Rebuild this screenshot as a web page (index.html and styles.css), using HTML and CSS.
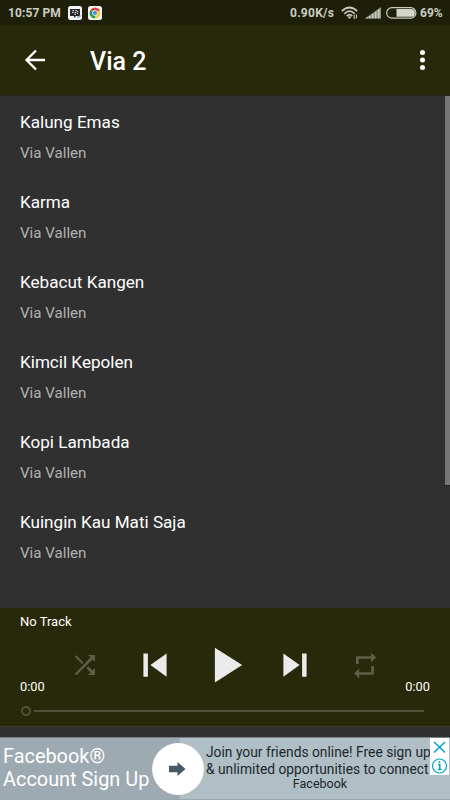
FILE: index.html
```html
<!DOCTYPE html>
<html lang="en">
<head>
<meta charset="utf-8">
<title>Via 2</title>
<link rel="stylesheet" href="styles.css">
</head>
<body>
<div class="app">
  <div class="status">
    <span class="clock">10:57 PM</span>
    <svg class="notif" width="14" height="14" viewBox="0 0 14 14"><rect width="14" height="14" rx="2.5" fill="#f4f4f4"/><path d="M2 3h10v7H8l-2 2v-2H2z" fill="#28292b"/><path d="M9 11h3v-2" stroke="#58a6c8" fill="none"/><path d="M4.4 4.6h1.6M7.2 4.6h1.6M4 6.4h1.6M6.8 6.4h1.6M9.3 5.5h1.2M6.4 8.2h1.6M8.9 7.3h1.2" stroke="#fff" stroke-width=".9"/></svg>
    <svg class="notif chrome" width="14" height="14" viewBox="0 0 14 14"><rect width="14" height="14" rx="2.5" fill="#f8f6f3"/><path d="M7 7L2.2 4.25A5.5 5.5 0 0 1 11.8 4.25z" fill="#dd4b3e"/><path d="M7 7L11.8 4.25A5.5 5.5 0 0 1 7 12.5z" fill="#fbca3e"/><path d="M7 7v5.5A5.5 5.5 0 0 1 2.2 4.25z" fill="#21a05a"/><path d="M7 4.3h4.8" stroke="#dd4b3e"/><circle cx="7" cy="7" r="2.7" fill="#f5f5f5"/><circle cx="7" cy="7" r="2.1" fill="#4688e8"/></svg>
    <span class="speed">0.90K/s</span>
    <svg class="wifi" width="18" height="14" viewBox="0 0 18 14" fill="none" stroke="#c9cabd" stroke-width="1.7"><path d="M.8 5.2Q8.5-2.2 16.2 5.2M3.3 7.8Q8.5 2.6 13.7 7.8M5.7 10.1Q8.5 7.2 11.3 10.1"/><path d="M8.5 13L6.8 11Q8.5 9.5 10.2 11z" fill="#c9cabd" stroke="none"/><path d="M13.2 9v4M15.4 8.5v4" stroke-width="1.1"/></svg>
    <svg class="signal" width="16" height="12" viewBox="0 0 16 12"><path d="M0 11.5L16 0v11.5z" fill="#92948a"/><path d="M1 11.5v-1h1.5v1zM4 11.5V9h1.5v2.5zM7 11.5V7h1.5v4.5zM10 11.5V5h1.5v6.5zM13 11.5V2.5h1.5v9z" fill="#c7c9bb"/></svg>
    <svg class="battery" width="31" height="12" viewBox="0 0 31 12"><rect x=".7" y=".7" width="29.2" height="10.4" rx="5.2" fill="none" stroke="#c9cabd" stroke-width="1.2"/><path d="M10.5 2H25a3.9 3.9 0 0 1 0 7.8H10.5z" fill="#d4d5cb"/></svg>
    <span class="percent">69%</span>
  </div>
  <header class="bar">
    <svg class="back" width="22" height="22" viewBox="0 0 22 22" fill="none" stroke="#fff" stroke-width="2.3"><path d="M21 11H2.5M12 1.5L2.5 11l9.5 9.5"/></svg>
    <h1>Via 2</h1>
    <svg class="more" width="6" height="22" viewBox="0 0 6 22" fill="#fff"><circle cx="2.5" cy="3.5" r="2.5"/><circle cx="2.5" cy="11" r="2.5"/><circle cx="2.5" cy="18.5" r="2.5"/></svg>
  </header>
  <main class="content">
    <ul class="songs">
      <li><b>Kalung Emas</b><span>Via Vallen</span></li>
      <li><b>Karma</b><span>Via Vallen</span></li>
      <li><b>Kebacut Kangen</b><span>Via Vallen</span></li>
      <li><b>Kimcil Kepolen</b><span>Via Vallen</span></li>
      <li><b>Kopi Lambada</b><span>Via Vallen</span></li>
      <li><b>Kuingin Kau Mati Saja</b><span>Via Vallen</span></li>
    </ul>
    <div class="scrollbar"></div>
  </main>
  <section class="player">
    <div class="track">No Track</div>
    <div class="controls">
      <svg width="70" height="36" viewBox="0 0 70 36" fill="#5d5e47"><path d="M26.3 8.3l7.2 7.1-1.5 1.5-7.2-7.1zM38 8h7v7l-2.4-2.4L26.3 28.3l-1.5-1.5L40.5 10.5zM38.3 19.2l4.3 4.3L45 21v7h-7l2.6-2.6-4-4z"/></svg>
      <svg width="70" height="36" viewBox="0 0 70 36" fill="#ebebeb"><path d="M23.4 6.5h4.5v23.3h-4.5zM30.4 18.1L46.6 6.5v23.3z"/></svg>
      <svg width="76" height="36" viewBox="0 0 76 36" fill="#ebebeb"><path d="M24.9.8L52.2 18 24.9 35.4z"/></svg>
      <svg width="64" height="36" viewBox="0 0 64 36" fill="#ebebeb"><path d="M17.4 6.5l16.2 11.6-16.2 11.7zM36.1 6.5h4.5v23.3h-4.5z"/></svg>
      <svg width="70" height="36" viewBox="0 0 70 36" fill="#5d5e47"><path d="M26 17V9.2h15V5.8l5.2 4.8-5.2 4.9v-3.7H28.8V17zM44 19v8.7H29.2v3.5L24 26.3l5.2-4.8v3.7h12V19z"/></svg>
    </div>
    <div class="times"><span>0:00</span><span>0:00</span></div>
    <div class="seek"><i class="knob"></i><i class="line"></i></div>
  </section>
  <footer class="ad">
    <div class="brand">Facebook®<br>Account Sign Up</div>
    <div class="copy"><p>Join your friends online! Free sign up</p><p>&amp; unlimited opportunities to connect</p><p class="third">Facebook</p></div>
    <svg class="go" width="52" height="52" viewBox="0 0 52 52"><circle cx="26" cy="26" r="25.9" fill="#fff"/><path d="M17 22.8h8.5V19l8 7-8 7v-3.8H17z" fill="#455a64"/></svg>
    <svg class="choices" width="19" height="37" viewBox="0 0 19 37" fill="none" stroke="#00a5c8" stroke-width="1.5"><path d="M0 0h19v37H0z" fill="#fff" stroke="none"/><path d="M4 4l11 10.5M15 4L4 14.5"/><circle cx="9.5" cy="28" r="7" stroke-width="1.2"/><path d="M8 26.5h1.8v5M8 31.6h3.5M9.5 23.3v1.8" stroke-width="1.5"/></svg>
  </footer>
</div>
</body>
</html>
```

FILE: styles.css
```css
* { box-sizing: border-box; margin: 0; padding: 0; }
body { background: #303030; font-family: Roboto, sans-serif; color: #fff; }
svg { display: block; flex: none; }
.app { width: 450px; height: 800px; display: flex; flex-direction: column; overflow: hidden; }

.status { height: 25px; flex: none; display: flex; align-items: center; padding-left: 8px; background: #1e1f09; color: #cccdc2; font-size: 12px; font-weight: 700; white-space: nowrap; }
.clock { width: 53px; letter-spacing: .1px; }
.notif { margin-left: 7px; }
.notif.chrome { margin-left: 6px; }
.speed { margin-left: 188px; width: 45px; letter-spacing: .25px; }
.wifi { margin-left: 6px; }
.signal { margin-left: 6px; }
.battery { margin-left: 5px; }
.percent { margin-left: 3px; }

.bar { height: 70px; flex: none; display: flex; align-items: center; padding: 0 24px 0 24px; background: #28290a; }
.bar h1 { margin-left: 44px; font-size: 25px; font-weight: 500; line-height: 30px; padding-top: 3px; }
.more { margin-left: auto; }

.content { height: 513px; flex: none; display: flex; justify-content: space-between; border-top: 1px solid #252525; }
.songs { list-style: none; padding-left: 20px; }
.songs li { height: 80px; padding-top: 15px; }
.songs b { display: block; font-size: 17.1px; line-height: 22px; font-weight: 400; }
.songs span { display: block; margin-top: 10px; font-size: 15.1px; line-height: 20px; color: #b0b0b0; }
.scrollbar { width: 5px; height: 390px; background: #777; border-bottom: 1px solid #222; }

.player { height: 119px; flex: none; background: #28290a; border-bottom: 1px solid #3b3b29; }
.track { padding: 6px 20px 0; font-size: 13px; line-height: 16px; }
.controls { height: 36px; margin: 17px 50px 0; display: flex; }
.times { display: flex; justify-content: space-between; margin: -4px 20px 0; font-size: 12.8px; line-height: 16px; }
.seek { display: flex; align-items: center; margin: 10px 26px 0 21px; height: 11px; }
.knob { width: 10px; height: 10px; border: 2.4px solid #50513a; border-radius: 50%; }
.line { flex: 1; height: 2px; margin-left: 3px; background: #50513a; }

.ad { position: relative; display: flex; height: 63px; margin-top: 10px; background: #b0bec5; border-top: 1px solid #78858b; border-bottom: 1px solid #9aa7ad; }
.brand { width: 180px; flex: none; padding: 7px 0 0 3px; background: #9eaab1; color: #fff; font-size: 19.9px; line-height: 23px; white-space: nowrap; }
.copy { width: 225px; margin-left: 26px; padding-top: 6px; color: #20272b; font-size: 13.8px; line-height: 17px; white-space: nowrap; }
.copy .third { width: 228px; font-size: 12.5px; line-height: 11px; text-align: center; }
.go { position: absolute; left: 152px; top: 5px; }
.choices { position: absolute; right: 1px; top: 0; }
```
